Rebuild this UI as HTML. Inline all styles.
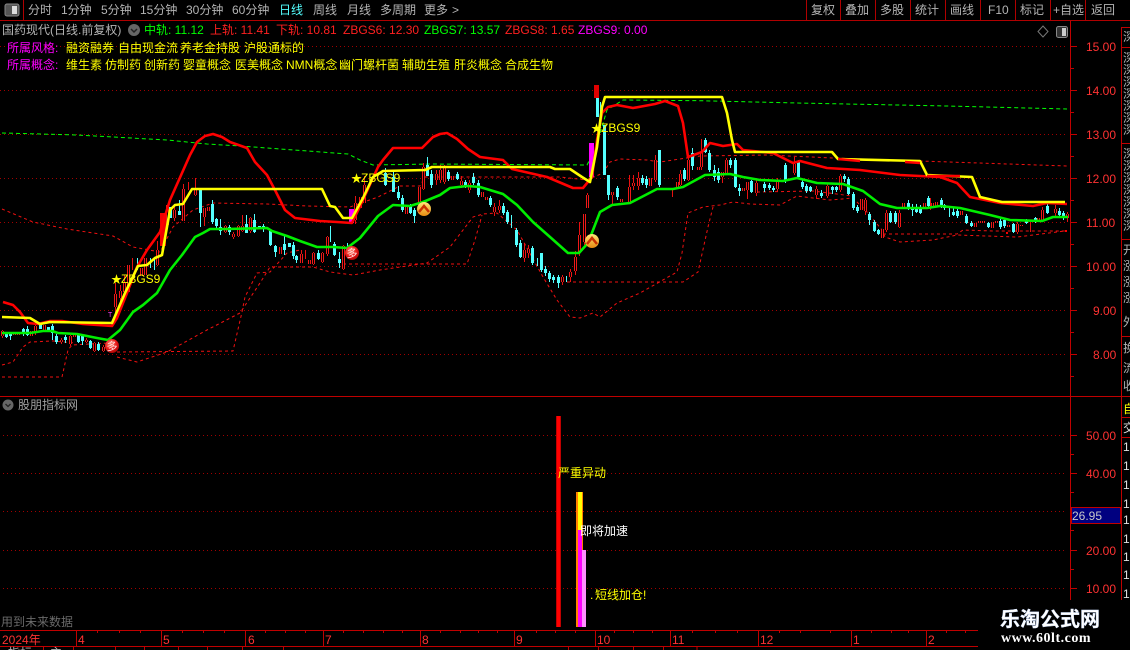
<!DOCTYPE html>
<html><head><meta charset="utf-8"><style>
html,body{margin:0;padding:0;background:#000;width:1130px;height:650px;overflow:hidden}
svg{display:block}
text{font-family:"Liberation Sans","WenQuanYi Zen Hei","Noto Sans CJK SC",sans-serif;font-size:12px;white-space:pre}
.tb text{fill:#b4b4b4}
.ax text{fill:#ff3232}
</style></head><body>
<svg width="1130" height="650" viewBox="0 0 1130 650" xmlns="http://www.w3.org/2000/svg">
<defs>
<clipPath id="rc"><rect x="1123" y="28" width="7" height="572"/></clipPath>
<clipPath id="main"><rect x="0" y="22" width="1069" height="373"/></clipPath>
<radialGradient id="rb1" cx=".4" cy=".35" r=".7"><stop offset="0" stop-color="#ff8a70"/><stop offset=".6" stop-color="#e81818"/><stop offset="1" stop-color="#a00000"/></radialGradient>
<linearGradient id="ob1" x1="0" y1="0" x2="0" y2="1"><stop offset="0" stop-color="#ffe878"/><stop offset="1" stop-color="#e88a10"/></linearGradient>
<path id="rbody" d="M2 331V336M14 333V335M18 332V335M31 331V336M35 326V332M44 325V330M61 340V342M70 336V344M74 334V337M86 340V342M94 343V351M103 347V351M115 294V307M120 291V298M124 283V292M128 265V292M141 268V276M145 258V275M157 250V265M167 205V225M174 210V218M183 189V221M195 189V195M204 208V217M208 207V211M225 226V232M233 234V237M238 226V236M242 226V231M250 218V231M280 247V254M301 254V263M309 260V264M313 253V264M322 253V262M327 237V254M343 246V269M355 203V220M360 197V208M364 185V203M406 207V214M419 187V207M423 167V189M436 174V180M440 170V180M444 168V182M452 176V180M461 181V185M469 183V190M482 192V197M486 197V200M494 207V212M499 206V210M524 250V258M528 249V253M562 277V282M570 272V277M575 257V271M579 235V252M584 214V242M587 195V208M612 192V195M621 199V202M629 187V202M633 183V186M638 178V186M650 178V186M655 160V180M677 182V188M680 174V185M688 160V180M698 167V170M701 153V167M722 172V177M726 160V173M743 188V191M747 182V190M756 183V193M777 180V189M794 164V173M816 189V195M827 186V196M840 176V190M861 199V210M865 200V211M882 229V238M886 213V230M899 213V227M903 203V207M924 203V207M932 203V207M936 202V207M961 211V215M975 223V227M979 221V223M983 221V223M992 222V228M996 221V223M1008 225V227M1017 224V232M1021 225V226M1038 218V220M1042 210V220M1055 209V213M1067 214V218"/>
</defs>
<rect width="1130" height="650" fill="#000"/>

<!-- main grid -->
<g stroke="#a00000" stroke-width="1" stroke-dasharray="1 3" fill="none">
<path d="M0 46.500H1067M0 90.500H1067M0 134.500H1067M0 178.500H1067M0 222.500H1067M0 266.500H1067M0 310.500H1067M0 354.500H1067"/>
<path d="M3 435.500H1067M3 473.500H1067M3 511.500H1067M3 550.500H1067M3 588.500H1067"/>
</g>

<g clip-path="url(#main)" fill="none" stroke-linejoin="round">
<!-- green dashed long -->
<path stroke="#00ff00" stroke-width="1" stroke-dasharray="4 3" d="M2 133L77 135L167 140L207 144L240 146L348 154L360 160L373 165L430 164L587 165L595 150L607 110L623 100L700 100.700L797 103L947 106L1067 109"/>
<!-- red thin dashed -->
<g stroke="#f01010" stroke-width="1" stroke-dasharray="3 3">
<path d="M2 209L33 222L67 229L113 236L133 247L160 252L173 227L193 210L213 203L267 204L307 206L350 207L378 197L400 186L420 186L425 177L520 177L560 177L587 180L603 173L610 162L620 159L647 160L660 162L700 156L767 155L833 158L920 161L1067 166"/>
<path d="M2 377L62 377L68 350L72 345L108 343"/>
<path d="M2 365L13 362L23 347L30 342L53 341L75 343"/>
<path d="M117 352L233 351L242 312L245 297L257 273L270 272L287 253L300 250"/>
<path d="M117 357L137 362L167 352L207 330L240 313L260 283L270 267L313 267L330 272L353 275L380 270L427 263L450 247L473 217L483 214L497 213L517 230L543 277L557 300L570 317L580 318L593 313L600 317L617 303L640 293L677 272L682 253L688 213L703 207L720 205L733 202L750 204L780 205L797 196L813 198L830 200L853 198L867 212L882 230L885 237L900 242L933 240L957 235L1017 237L1065 231"/>
<path d="M343 264L467 264L475 240L482 215"/>
<path d="M567 282L683 282L698 272L708 227L713 207"/>
<path d="M757 192L813 191L852 196"/>
<path d="M883 234L957 234L963 230L993 231L1065 231"/>
</g>
<!-- candles -->
<g transform="translate(.5,0)" shape-rendering="crispEdges">
<path stroke="#e81010" stroke-width="1" d="M2 330V338M35 325V335M61 338V344M70 335V346M86 338V343M94 342V352M103 345V352M115 283V315M120 285V303M124 275V297M132 258V270M145 258V275M157 241V266M174 205V221M183 184V221M188 182V190M195 178V196M204 208V226M225 225V233M233 232V239M238 225V237M242 215V232M250 217V233M280 247V254M301 250V263M305 250V259M313 252V265M322 252V263M327 236V256M343 245V270M355 196V224M364 176V203M419 187V212M423 163V190M436 170V185M440 165V183M444 165V184M461 176V188M469 180V193M494 203V216M499 200V213M524 243V262M528 245V258M562 275V285M570 269V282M575 251V275M579 222V256M584 214V245M587 193V208M612 192V204M629 175V202M633 175V190M638 172V190M655 155V182M672 190V197M680 170V186M688 157V181M701 139V170M722 172V183M726 158V175M747 182V199M756 180V196M777 178V192M794 157V175M816 186V199M827 183V198M840 174V192M865 198V215M886 210V232M899 210V228M930 198V210M1017 222V234M1030 222V232M1042 207V222M1055 205V216M1067 212V222"/>
<path stroke="#54ffff" stroke-width="1" d="M6 332V338M10 333V340M23 328V336M27 326V336M52 324V340M56 334V344M65 335V343M78 334V343M82 335V345M90 340V349M98 342V351M137 258V270M150 258V268M154 258V270M179 200V215M200 190V227M212 200V224M216 218V228M220 219V235M229 225V235M246 215V233M254 214V233M263 224V232M270 229V246M275 245V257M284 236V255M293 242V259M296 255V263M318 250V260M330 226V242M334 242V256M339 252V268M347 243V250M385 168V186M393 170V192M398 186V200M402 195V212M410 204V214M414 208V223M427 157V176M431 170V188M448 170V181M457 172V180M465 180V188M473 173V185M478 180V197M490 196V207M503 203V215M507 210V224M511 215V228M516 228V247M520 240V258M532 246V265M537 258V266M541 253V272M545 266V276M549 271V282M553 275V283M558 275V288M566 276V282M597 95V117M600 102V117M604 125V175M608 175V200M617 186V200M642 175V185M646 176V188M659 150V187M684 168V181M692 148V170M705 138V153M709 150V172M714 165V181M718 168V183M730 158V168M735 158V188M739 184V196M751 180V193M764 182V192M769 183V190M773 186V192M785 163V183M798 160V178M802 180V189M806 184V193M810 186V192M821 190V198M832 186V194M836 186V192M844 174V182M848 177V195M853 192V210M857 205V213M869 212V225M874 220V232M878 229V235M890 211V223M895 211V224M908 200V210M912 204V216M916 204V213M920 205V214M928 196V207M941 198V208M944 204V210M949 206V217M953 208V216M957 208V218M966 214V224M971 221V227M988 222V228M1000 219V229M1004 218V228M1013 223V233M1026 219V224M1035 217V223M1047 204V214M1059 208V216M1063 211V220"/>
<path stroke="#54ffff" stroke-width="3" d="M6 333V337M10 334V336M23 329V333M27 329V335M40 325V329M48 327V330M52 326V333M56 336V342M65 337V340M78 335V342M82 336V341M90 341V348M98 344V350M107 345V348M170 207V218M179 211V215M200 190V213M212 204V222M216 219V226M220 227V231M229 227V232M246 224V233M254 220V232M259 226V229M263 226V228M270 231V245M275 246V252M284 244V250M289 243V247M293 245V256M296 256V260M318 253V259M334 244V255M339 259V263M385 173V185M393 177V192M398 192V198M402 198V210M410 206V213M414 210V216M427 165V176M431 174V185M448 172V179M457 174V179M465 182V187M473 177V183M478 183V195M490 198V205M503 206V213M507 212V222M516 230V245M520 243V257M532 248V263M541 253V270M545 269V273M549 273V279M553 277V280M558 277V283M597 98V117M604 125V175M608 175V195M617 188V197M642 178V183M646 179V185M659 150V185M684 170V179M692 153V166M705 140V152M709 153V170M714 170V177M718 172V180M730 160V165M735 160V187M739 188V191M751 181V192M764 184V188M769 185V188M773 188V190M785 165V181M798 162V177M802 182V187M806 186V191M810 187V191M821 193V196M832 187V190M836 187V190M844 176V179M848 179V194M853 194V208M857 207V211M869 214V220M874 222V231M878 230V234M890 213V222M895 213V222M908 203V207M912 207V210M916 207V212M920 207V213M928 198V206M941 200V207M944 205V208M953 212V215M957 211V216M966 216V223M971 223V226M988 223V227M1000 221V227M1004 220V226M1013 224V232M1026 220V223M1035 218V221M1047 206V213M1059 211V215M1063 213V218"/>
<use href="#rbody" stroke="#f01818" stroke-width="3"/>
<use href="#rbody" stroke="#000" stroke-width="1"/>
</g>
<rect x="160" y="213" width="6" height="33" fill="#f00000"/>
<rect x="349" y="209" width="5" height="14" fill="#ff00ff"/>
<rect x="589" y="143" width="5" height="34" fill="#ff00ff"/>
<rect x="594" y="85" width="5" height="13" fill="#e00000"/>
<rect x="1006" y="232" width="2" height="2" fill="#f00"/><rect x="1065" y="230" width="2" height="2" fill="#f00"/>
<!-- bold lines -->
<path stroke="#ff0000" stroke-width="2.600" d="M3 302L13 305L20 312L28 323L38 324L50 321L62 321L83 324L112 326L117 318L127 293L137 267L147 250L160 232L170 200L182 173L190 155L197 142L205 136L213 134L222 137L230 142L247 148L255 162L267 175L276 192L285 210L295 218L320 221L337 222L352 223L363 200L378 167L383 160L393 148L422 148L433 137L440 134L447 133L457 139L468 149L480 157L503 160L512 169L547 177L573 188L583 188L592 177L597 140L602 113L608 107L617 105L633 108L655 104L665 101L678 106L683 123L688 157L702 152L710 143L723 146L737 144L743 150L773 153L793 163L800 161L827 168L860 170L900 175L940 177L957 183L970 197L1000 203L1033 206L1047 203L1067 204"/>
<path stroke="#ffff00" stroke-width="2.600" d="M2 317L30 318L40 324L50 322L112 323L125 293L138 266L147 265L155 258L162 255L170 210L175 205L183 204L192 189L322 189L330 206L335 207L343 218L352 218L363 198L373 177L383 171L425 170L432 167L550 167L555 169L570 169L582 177L590 182L597 147L602 107L605 97L722 97L727 113L732 140L735 152L832 152L838 159L920 161L927 175L972 177L980 197L993 200L1002 202L1065 202"/>
<path stroke="#ff0000" stroke-width="2.600" d="M838 159L860 161M920 163L905 162M927 176L960 176"/>
<path stroke="#00ee00" stroke-width="2.600" d="M2 333L30 333L43 331L52 331L58 333L77 334L87 336L97 338L108 340L120 330L133 312L143 305L157 293L170 270L182 255L195 237L203 233L210 229L227 229L267 228L272 231L287 236L300 241L317 247L333 247L347 248L360 238L378 216L393 205L410 206L423 202L440 195L450 188L467 186L480 187L503 194L517 205L533 222L550 237L568 253L579 253L588 243L600 212L612 205L630 203L657 189L673 189L683 187L705 175L730 174L743 177L760 180L783 181L797 178L817 183L843 184L863 191L880 204L897 208L927 208L940 206L960 208L990 215L1010 220L1042 221L1053 217L1068 217"/>
</g>

<!-- badges -->
<g>
<circle cx="112" cy="346" r="7" fill="url(#rb1)"/><text x="106.500" y="350" fill="#ffe0e0" style="font-size:11px">多</text>
<circle cx="352" cy="253" r="7" fill="url(#rb1)"/><text x="346.500" y="257" fill="#ffe0e0" style="font-size:11px">多</text>
<circle cx="424" cy="209" r="7" fill="url(#ob1)"/><path d="M419 212L424 206L429 212" fill="none" stroke="#c83000" stroke-width="2.500"/>
<circle cx="592" cy="241" r="7" fill="url(#ob1)"/><path d="M587 244L592 238L597 244" fill="none" stroke="#c83000" stroke-width="2.500"/>
</g>
<text x="108" y="317" fill="#ff40ff" style="font-size:7px">T</text>
<g fill="#ffff00">
<text x="111" y="283" style="font-size:11px">★</text><text x="121" y="283">ZBGS9</text>
<text x="351" y="182" style="font-size:11px">★</text><text x="361" y="182">ZBGS9</text>
<text x="591" y="132" style="font-size:11px">★</text><text x="601" y="132">ZBGS9</text>
</g>

<!-- toolbar -->
<path d="M0 20.500H1130M23.500 0V20M806.500 0V20M840.500 0V20M875.500 0V20M910.500 0V20M945.500 0V20M980.500 0V20M1015.500 0V20M1050.500 0V20M1085.500 0V20" stroke="#b00000" fill="none"/>
<rect x="5" y="4" width="14" height="12" rx="2" fill="#555" stroke="#888"/><rect x="12" y="6" width="5" height="8" fill="#ddd"/>
<g class="tb">
<text x="28" y="14">分时</text><text x="61" y="14">1分钟</text><text x="101" y="14">5分钟</text><text x="140" y="14">15分钟</text><text x="186" y="14">30分钟</text><text x="232" y="14">60分钟</text>
<text x="279" y="14" style="fill:#54ffff">日线</text><text x="313" y="14">周线</text><text x="347" y="14">月线</text><text x="380" y="14">多周期</text><text x="424" y="14">更多</text><text x="452" y="14">&gt;</text>
<text x="811" y="14">复权</text><text x="845" y="14">叠加</text><text x="880" y="14">多股</text><text x="915" y="14">统计</text><text x="950" y="14">画线</text><text x="988" y="14">F10</text><text x="1020" y="14">标记</text><text x="1053" y="14">+自选</text><text x="1091" y="14">返回</text>
</g>

<!-- info row -->
<text x="2" y="34" fill="#b4b4b4">国药现代(日线.前复权)</text>
<circle cx="134" cy="30" r="6" fill="#666"/><path d="M131 29L134 32L137 29" stroke="#222" fill="none" stroke-width="1.500"/>
<text x="144" y="34" fill="#00ff00">中轨: 11.12</text>
<text x="210" y="34" fill="#ff2020">上轨: 11.41</text>
<text x="276" y="34" fill="#ff2020">下轨: 10.81</text>
<text x="343" y="34" fill="#ff2020">ZBGS6: 12.30</text>
<text x="424" y="34" fill="#00ff00">ZBGS7: 13.57</text>
<text x="505" y="34" fill="#ff2020">ZBGS8: 1.65</text>
<text x="578" y="34" fill="#ff00ff">ZBGS9: 0.00</text>
<path d="M1043 26L1048 31.500L1043 37L1038 31.500Z" fill="none" stroke="#777"/>
<rect x="1056.500" y="26.500" width="11" height="11" rx="2" fill="#333" stroke="#888"/><rect x="1062" y="28" width="4" height="8" fill="#ccc"/>

<text x="7" y="52" fill="#ff00ff">所属风格:</text>
<g fill="#ffff00">
<text x="66" y="52">融资融券</text><text x="118" y="52">自由现金流</text><text x="180" y="52">养老金持股</text><text x="244" y="52">沪股通标的</text>
</g>
<text x="7" y="69" fill="#ff00ff">所属概念:</text>
<g fill="#ffff00">
<text x="66" y="69">维生素</text><text x="105" y="69">仿制药</text><text x="144" y="69">创新药</text><text x="183" y="69">婴童概念</text><text x="235" y="69">医美概念</text><text x="286" y="69">NMN概念</text><text x="339" y="69">幽门螺杆菌</text><text x="402" y="69">辅助生殖</text><text x="454" y="69">肝炎概念</text><text x="505" y="69">合成生物</text>
</g>

<!-- axes & frames -->
<path d="M1070.500 21V600M1121.500 27V600M0 396.500H1130M1122 27.500H1130M1122 47.500H1130M1122 143.500H1130M1122 239.500H1130M1122 336.500H1130M1122 417.500H1130M1122 437.500H1130" stroke="#c00000" fill="none"/>
<path d="M1071 46.500H1077M1071 90.500H1077M1071 134.500H1077M1071 178.500H1077M1071 222.500H1077M1071 266.500H1077M1071 310.500H1077M1071 354.500H1077M1071 68.500H1074M1071 112.500H1074M1071 156.500H1074M1071 200.500H1074M1071 244.500H1074M1071 288.500H1074M1071 332.500H1074M1071 376.500H1074M1071 435.500H1077M1071 473.500H1077M1071 550.500H1077M1071 588.500H1077M1071 454.500H1074M1071 492.500H1074M1071 530.500H1074M1071 569.500H1074" stroke="#c00000" fill="none"/>
<g class="ax">
<text x="1086" y="51">15.00</text><text x="1086" y="95">14.00</text><text x="1086" y="139">13.00</text><text x="1086" y="183">12.00</text><text x="1086" y="227">11.00</text><text x="1086" y="271">10.00</text><text x="1093" y="315">9.00</text><text x="1093" y="359">8.00</text>
<text x="1086" y="440">50.00</text><text x="1086" y="478">40.00</text><text x="1086" y="555">20.00</text><text x="1086" y="593">10.00</text>
</g>
<rect x="1071.500" y="507.500" width="49" height="16" fill="#000080" stroke="#c00000"/>
<text x="1072" y="520" fill="#c8c8c8">26.95</text>

<!-- right cut text -->
<g clip-path="url(#rc)" fill="#b4b4b4">
<text x="1123" y="41">深</text>
<text x="1123" y="62">深</text><text x="1123" y="74">深</text><text x="1123" y="86">深</text><text x="1123" y="98">深</text><text x="1123" y="110">深</text><text x="1123" y="122">深</text><text x="1123" y="134">深</text>
<text x="1123" y="158">深</text><text x="1123" y="170">深</text><text x="1123" y="182">深</text><text x="1123" y="194">深</text><text x="1123" y="206">深</text><text x="1123" y="218">深</text><text x="1123" y="230">深</text>
<text x="1123" y="254">开</text><text x="1123" y="270">涨</text><text x="1123" y="286">涨</text><text x="1123" y="302">涨</text><text x="1123" y="326">外</text>
<text x="1123" y="352">换</text><text x="1123" y="372">流</text><text x="1123" y="390">收</text>
<text x="1123" y="413" fill="#ffff00">自</text><text x="1123" y="432" fill="#e0e0e0">交</text>
<g fill="#e0e0e0" style="font-size:14px"><text x="1123" y="451">1</text><text x="1123" y="470">1</text><text x="1123" y="489">1</text><text x="1123" y="508">1</text><text x="1123" y="524">1</text><text x="1123" y="543">1</text><text x="1123" y="561">1</text><text x="1123" y="579">1</text><text x="1123" y="598">1</text></g>
</g>

<!-- lower panel -->
<circle cx="8" cy="405" r="5.500" fill="#666"/><path d="M5.500 404L8 406.500L10.500 404" stroke="#222" fill="none" stroke-width="1.300"/>
<text x="18" y="409" fill="#a0a0a0">股朋指标网</text>
<g shape-rendering="crispEdges">
<rect x="556" y="416" width="5" height="211" fill="#c00000"/><rect x="557" y="416" width="3" height="211" fill="#ff0000"/>
<rect x="576" y="492" width="7" height="58" fill="#ff8000"/><rect x="576" y="550" width="2" height="77" fill="#ff8000"/>
<rect x="578" y="492" width="4" height="38" fill="#ffff00"/>
<rect x="578" y="530" width="4" height="97" fill="#ff00ff"/>
<rect x="582" y="550" width="4" height="77" fill="#ff90ff"/>
</g>
<text x="558" y="477" fill="#ffff00">严重异动</text>
<text x="580" y="535" fill="#ffffff">即将加速</text>
<text x="590" y="599" fill="#ffff00">.</text><text x="595" y="599" fill="#ffff00">短线加仓!</text>
<text x="1" y="626" fill="#6a6a6a">用到未来数据</text>

<!-- time axis -->
<path d="M0 630.500H978M0 646.500H978M76.500 631V646M161.500 631V646M245.500 631V646M323.500 631V646M420.500 631V646M514.500 631V646M595.500 631V646M670.500 631V646M758.500 631V646M851.500 631V646M926.500 631V646M43.500 646V650M73.500 646V650M115.500 646V650M144.500 646V650M178.500 646V650M207.500 646V650M242.500 646V650M283.500 646V650M568.500 646V650M598.500 646V650M633.500 646V650M663.500 646V650M697 646V650" stroke="#c00000" fill="none"/>
<path d="M97.500 631V633M119.500 631V633M140.500 631V633M182.500 631V633M203.500 631V633M224.500 631V633M265.500 631V633M285.500 631V633M305.500 631V633M343.500 631V633M363.500 631V633M383.500 631V633M402.500 631V633M440.500 631V633M460.500 631V633M478.500 631V633M497.500 631V633M536.500 631V633M555.500 631V633M575.500 631V633M614.500 631V633M633.500 631V633M652.500 631V633M692.500 631V633M715.500 631V633M737.500 631V633M779.500 631V633M800.500 631V633M830.500 631V633M871.500 631V633M891.500 631V633M908.500 631V633M946.500 631V633M965.500 631V633" stroke="#c00000" fill="none"/>
<g class="ax">
<text x="2" y="644">2024年</text><text x="78" y="644">4</text><text x="163" y="644">5</text><text x="248" y="644">6</text><text x="325" y="644">7</text><text x="422" y="644">8</text><text x="516" y="644">9</text><text x="597" y="644">10</text><text x="672" y="644">11</text><text x="760" y="644">12</text><text x="853" y="644">1</text><text x="928" y="644">2</text>
</g>
<text x="8" y="657" fill="#b4b4b4">指标</text><text x="50" y="657" fill="#b4b4b4">主</text>

<!-- watermark -->
<rect x="978" y="600" width="152" height="50" fill="#000"/>
<text x="1000" y="626" fill="#fff" stroke="#cfe0ff" stroke-width=".4" style="font-size:20px;font-weight:bold">乐淘公式网</text>
<text x="1001" y="642" fill="#fff" style="font-family:'Liberation Serif',serif;font-size:14px;font-weight:bold;letter-spacing:.5px">www.60lt.com</text>
</svg>
</body></html>
